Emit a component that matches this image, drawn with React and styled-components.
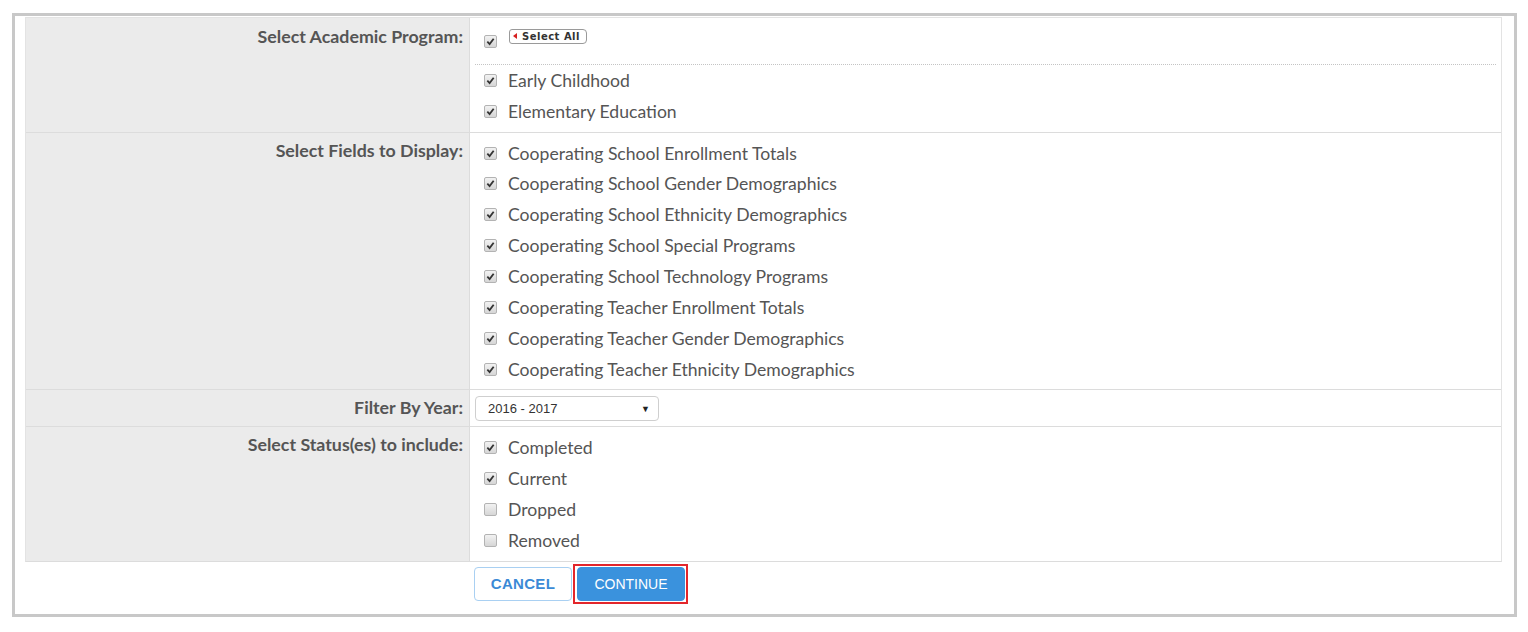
import React from 'react'
import styled, { createGlobalStyle } from 'styled-components'

const GlobalStyle = createGlobalStyle`
  html, body {
    margin: 0;
    padding: 0;
    background: #fff;
    font-family: Lato, "Open Sans", sans-serif;
  }
`

const Page = styled.div`
  padding: 13px 0 0 12px;
`

const Frame = styled.div`
  box-sizing: border-box;
  width: 1505px;
  border: 3px solid #c8c8c8;
  padding: 1px 12px 10px 10px;
`

const Table = styled.div`
  border: 1px solid #e3e3e3;
  border-bottom: 1px solid #dcdcdc;
`

const Row = styled.div`
  display: grid;
  grid-template-columns: 444px 1fr;
  & + & {
    border-top: 1px solid #dcdcdc;
  }
`

const Label = styled.div`
  background: #ebebeb;
  border-right: 1px solid #dcdcdc;
  text-align: right;
  padding: ${p => p.$top || 8}px 6px 0 0;
  font-weight: 700;
  font-size: 17.8px;
  line-height: 20px;
  color: #555;
`

const Cell = styled.div`
  padding: ${p => p.$pad || '5px 14px'};
`

const SelectAllRow = styled.div`
  display: flex;
  align-items: center;
  height: 30px;
  margin-bottom: 11px;
`

const Dotted = styled.div`
  border-top: 1px dotted #c4c4c4;
  margin: 0 -9px 0 -9px;
`

const Item = styled.label`
  display: flex;
  align-items: center;
  height: 30.85px;
  font-size: 17.6px;
  color: #555;
  gap: 11px;
`

const Box = styled.span`
  width: 11px;
  height: 11px;
  border: 1px solid #b3b3b3;
  border-radius: 2px;
  background: linear-gradient(#f2f2f2, #d6d6d6);
  display: inline-flex;
  align-items: center;
  justify-content: center;
  flex: none;
  margin-top: ${p => p.$drop || 0}px;
`

const SelectAllBtn = styled.span`
  position: relative;
  display: inline-flex;
  align-items: center;
  height: 13px;
  margin-left: 12px;
  margin-top: -4px;
  padding: 0 6px 0 12px;
  border: 1px solid #9a9a9a;
  border-radius: 3px 4px 4px 3px;
  background: #fff;
  font-family: "DejaVu Sans", sans-serif;
  font-size: 10px;
  font-weight: 700;
  letter-spacing: 0.5px;
  color: #333;
  &::before {
    content: '';
    position: absolute;
    left: 3px;
    top: 3px;
    border-right: 4px solid #d62020;
    border-top: 3.5px solid transparent;
    border-bottom: 3.5px solid transparent;
  }
`

const YearSelect = styled.div`
  box-sizing: border-box;
  width: 184px;
  height: 25px;
  border: 1px solid #cfcfcf;
  border-radius: 4px;
  display: flex;
  align-items: center;
  justify-content: space-between;
  padding: 0 8px 0 12px;
  font-family: "Liberation Sans", Arial, sans-serif;
  font-size: 13px;
  color: #333;
`

const Caret = styled.span`
  font-size: 9px;
  color: #222;
`

const Actions = styled.div`
  display: flex;
  align-items: center;
  gap: 1px;
  padding: 2px 0 0 449px;
`

const Highlight = styled.span`
  display: inline-flex;
  border: 2px solid #e3262b;
  padding: 1px 1px 1px 2px;
`

const Button = styled.button`
  height: 34px;
  border-radius: 4px;
  font-family: "Liberation Sans", Arial, sans-serif;
  cursor: pointer;
  border: 1px solid ${p => (p.$primary ? '#3a92dd' : '#a9d0f2')};
  background: ${p => (p.$primary ? '#3a92dd' : '#fff')};
  color: ${p => (p.$primary ? '#fff' : '#3b8ad6')};
  font-size: ${p => (p.$primary ? 14 : 15)}px;
  font-weight: ${p => (p.$primary ? 400 : 700)};
  width: ${p => p.$w}px;
  letter-spacing: ${p => (p.$primary ? 0 : 0.3)}px;
`

const Check = () => (
  <svg width="9" height="9" viewBox="0 0 10 10">
    <path d="M1.5 5.2 L4 7.8 L8.5 2" fill="none" stroke="#333" strokeWidth="2" />
  </svg>
)

const CheckItem = ({ checked, children }) => (
  <Item>
    <Box>{checked && <Check />}</Box>
    {children}
  </Item>
)

const programs = ['Early Childhood', 'Elementary Education']

const fields = [
  'Cooperating School Enrollment Totals',
  'Cooperating School Gender Demographics',
  'Cooperating School Ethnicity Demographics',
  'Cooperating School Special Programs',
  'Cooperating School Technology Programs',
  'Cooperating Teacher Enrollment Totals',
  'Cooperating Teacher Gender Demographics',
  'Cooperating Teacher Ethnicity Demographics'
]

const statuses = [
  { name: 'Completed', checked: true },
  { name: 'Current', checked: true },
  { name: 'Dropped', checked: false },
  { name: 'Removed', checked: false }
]

const App = () => (
  <>
    <GlobalStyle />
    <Page>
      <Frame>
        <Table>
          <Row>
            <Label $top={8}>Select Academic Program:</Label>
            <Cell>
              <SelectAllRow>
                <Box $drop={6}><Check /></Box>
                <SelectAllBtn>Select All</SelectAllBtn>
              </SelectAllRow>
              <Dotted />
              {programs.map(p => (
                <CheckItem key={p} checked>{p}</CheckItem>
              ))}
            </Cell>
          </Row>
          <Row>
            <Label $top={7}>Select Fields to Display:</Label>
            <Cell>
              {fields.map(f => (
                <CheckItem key={f} checked>{f}</CheckItem>
              ))}
            </Cell>
          </Row>
          <Row>
            <Label $top={7}>Filter By Year:</Label>
            <Cell $pad="6px 5px 5px 5px">
              <YearSelect>
                2016 - 2017
                <Caret>▼</Caret>
              </YearSelect>
            </Cell>
          </Row>
          <Row>
            <Label $top={7}>Select Status(es) to include:</Label>
            <Cell>
              {statuses.map(s => (
                <CheckItem key={s.name} checked={s.checked}>{s.name}</CheckItem>
              ))}
            </Cell>
          </Row>
        </Table>
        <Actions>
          <Button $w={98}>CANCEL</Button>
          <Highlight>
            <Button $primary $w={108}>CONTINUE</Button>
          </Highlight>
        </Actions>
      </Frame>
    </Page>
  </>
)

export default App
